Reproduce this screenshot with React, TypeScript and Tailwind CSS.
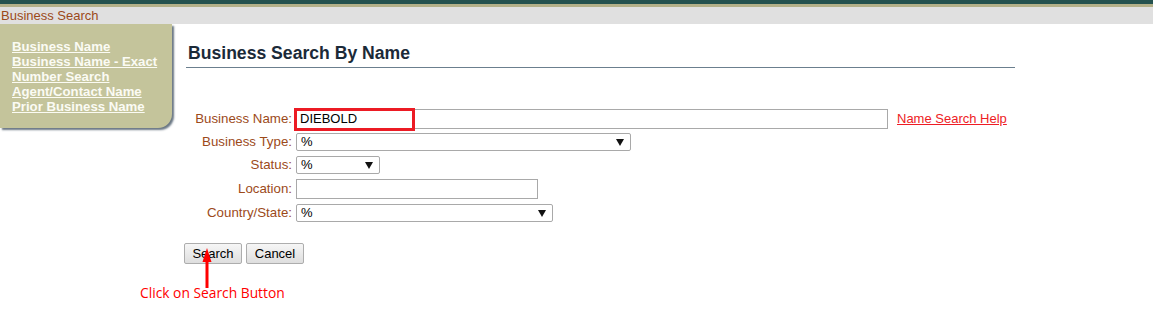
import React from 'react';

const sideLinks = [
  'Business Name',
  'Business Name - Exact',
  'Number Search',
  'Agent/Contact Name',
  'Prior Business Name',
];

function SelectBox({ width, value }: { width: string; value: string }) {
  return (
    <div className={`${width} h-[18px] flex items-center justify-between border border-[#a9a9a9] rounded-[2px] bg-white pl-[4px] pr-[6px] text-[13px] text-black`}>
      <span>{value}</span>
      <svg width="8" height="7" viewBox="0 0 8 7">
        <path d="M0 0 L8 0 L4 7 Z" fill="#111" />
      </svg>
    </div>
  );
}

function Label({ children }: { children: React.ReactNode }) {
  return <div className="text-right text-[13.3px] text-[#9c4a1a] pr-[4px]">{children}</div>;
}

export default function App() {
  return (
    <div className="relative w-[1153px] h-[321px] bg-white overflow-hidden font-['Liberation_Sans',Arial,sans-serif]">
      <div className="h-[4px] bg-[#24524e]" />
      <div className="h-[3px] bg-[#b3b088]" />
      <div className="h-[17px] bg-[#e0e0e0] pl-[1px] text-[13px] leading-[17px] text-[#9c4a1a]">Business Search</div>

      <div className="flex items-start">
        <div className="w-[172px] h-[104px] shrink-0 bg-[#c4c49b] rounded-br-[14px] shadow-[2px_2px_2px_rgba(80,95,110,0.85)] pl-[12px] pt-[15px]">
          {sideLinks.map((l) => (
            <div key={l} className="text-[13.2px] leading-[15px] font-bold text-[#fbfbf4] underline underline-offset-[1px]">
              {l}
            </div>
          ))}
        </div>

        <div className="pl-[12px] pt-[19px]">
          <div className="ml-[2px] w-[829px] border-b border-[#6b7f8e] pl-[2px] pb-[4px]">
            <h1 className="text-[17.6px] leading-[20px] font-bold text-[#1b2a38]">Business Search By Name</h1>
          </div>

          <div className="mt-[39px] grid grid-cols-[112px_auto] items-center">
            <div className="h-[24px] flex items-center justify-end"><Label>Business Name:</Label></div>
            <div className="h-[24px] flex items-center">
              <div className="relative w-[592px] h-[20px] border border-[#a9a9a9] bg-white pl-[3px] text-[13px] leading-[18px] text-black">
                DIEBOLD
                <div className="absolute -left-[3px] -top-[2px] w-[121px] h-[23px] border-[3px] border-[#ec1b24]" />
              </div>
              <a className="ml-[9px] text-[13px] text-[#ee1c25] underline">Name Search Help</a>
            </div>

            <div className="h-[22px] flex items-center justify-end"><Label>Business Type:</Label></div>
            <div className="h-[22px] flex items-center"><SelectBox width="w-[335px]" value="%" /></div>

            <div className="h-[24px] flex items-center justify-end"><Label>Status:</Label></div>
            <div className="h-[24px] flex items-center"><SelectBox width="w-[84px]" value="%" /></div>

            <div className="h-[24px] flex items-center justify-end"><Label>Location:</Label></div>
            <div className="h-[24px] flex items-center">
              <div className="w-[242px] h-[20px] border border-[#a9a9a9] bg-white" />
            </div>

            <div className="h-[24px] flex items-center justify-end"><Label>Country/State:</Label></div>
            <div className="h-[24px] flex items-center"><SelectBox width="w-[257px]" value="%" /></div>
          </div>

          <div className="mt-[18px] flex gap-[4px]">
            <button className="w-[58px] h-[21px] border border-[#adadad] rounded-[2px] bg-gradient-to-b from-[#f6f6f6] to-[#dedede] text-[13px] text-black">Search</button>
            <button className="w-[58px] h-[21px] border border-[#adadad] rounded-[2px] bg-gradient-to-b from-[#f6f6f6] to-[#dedede] text-[13px] text-black">Cancel</button>
          </div>
        </div>
      </div>

      <svg className="absolute left-[201px] top-[248px]" width="12" height="40" viewBox="0 0 12 40">
        <path d="M6 0 L10.5 14 L1.5 14 Z" fill="#ff0000" />
        <rect x="4.5" y="12" width="3" height="28" fill="#ff0000" />
      </svg>
      <div className="absolute left-[140px] top-[284px] text-[13.8px] leading-[18px] text-[#ff0000] font-['Open_Sans',sans-serif]">
        Click on Search Button
      </div>
    </div>
  );
}
